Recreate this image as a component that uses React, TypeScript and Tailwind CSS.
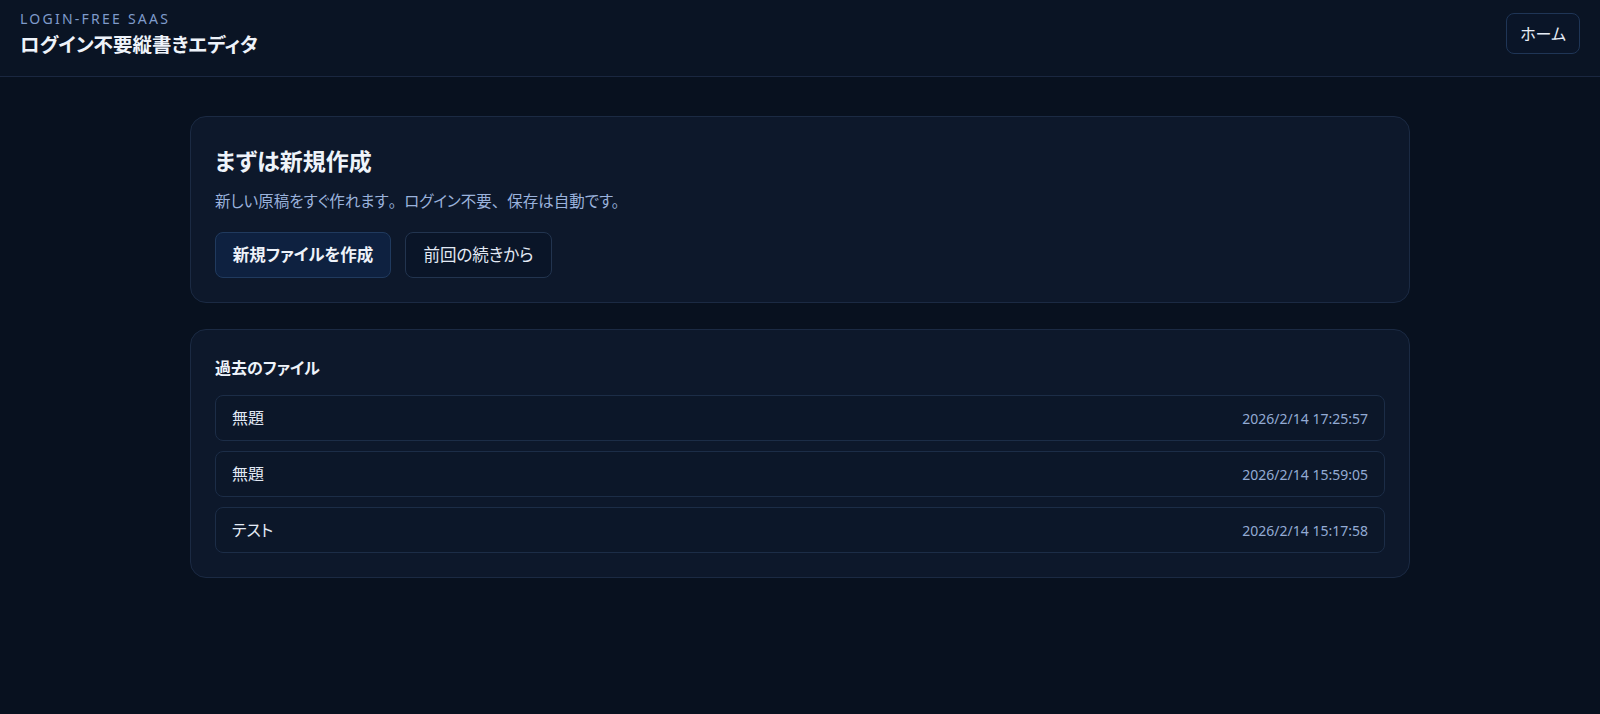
import React from "react";

const files = [
  { title: "無題", updated: "2026/2/14 17:25:57" },
  { title: "無題", updated: "2026/2/14 15:59:05" },
  { title: "テスト", updated: "2026/2/14 15:17:58" },
];

// full-width punctuation keeps its natural spacing
const Punct = ({ children }: { children: React.ReactNode }) => (
  <span className="[font-feature-settings:normal]">{children}</span>
);

export default function App() {
  return (
    <div className="min-h-screen bg-[#08111f] text-[#e3eaf5] font-['Noto_Sans','Noto_Sans_CJK_JP',sans-serif] [font-feature-settings:'palt']">
      <header className="flex items-start justify-between h-[77px] px-5 pt-[10px] bg-[#0a1424] border-b border-[#1a2740]">
        <div>
          <div className="text-[14px] leading-[18px] tracking-[0.16em] text-[#7f9bcb]">LOGIN-FREE SAAS</div>
          <h1 className="mt-[3px] text-[19.5px] leading-[28px] font-bold text-[#eef3fa]">ログイン不要縦書きエディタ</h1>
        </div>
        <button className="mt-[3px] h-[41px] px-[13px] rounded-lg border border-[#1f3556] bg-[#0a1528] text-[16px] text-[#e6ecf6]">
          ホーム
        </button>
      </header>

      <main className="max-w-[1220px] mx-auto pt-[39px] flex flex-col gap-[26px]">
        <section className="rounded-2xl border border-[#1b2a43] bg-[#0d182b] px-6 pt-7 pb-6">
          <h2 className="text-[23px] leading-[33px] font-bold text-[#eef3fa]">まずは新規作成</h2>
          <p className="mt-[11px] text-[15.5px] leading-[24px] text-[#9ab2dc]">
            新しい原稿をすぐ作れます<Punct>。</Punct>ログイン不要<Punct>、</Punct>保存は自動です。
          </p>
          <div className="mt-[19px] flex gap-[14px]">
            <button className="h-[46px] w-[176px] rounded-lg border border-[#203a5e] bg-[#0e2140] text-[16.5px] font-bold text-[#eef3fa]">
              新規ファイルを作成
            </button>
            <button className="h-[46px] w-[147px] rounded-lg border border-[#22344f] bg-[#0a1528] text-[16.5px] text-[#e3eaf5]">
              前回の続きから
            </button>
          </div>
        </section>

        <section className="rounded-2xl border border-[#1b2a43] bg-[#0d182b] px-6 pt-[26px] pb-6">
          <h3 className="text-[16px] leading-[24px] font-bold text-[#eef3fa]">過去のファイル</h3>
          <ul className="mt-[15px] flex flex-col gap-[10px]">
            {files.map((f, i) => (
              <li
                key={i}
                className="h-[46px] flex items-center justify-between px-4 rounded-lg border border-[#1c2d47] bg-[#0c1729]"
              >
                <span className="text-[16px] text-[#e3eaf5]">{f.title}</span>
                <span className="text-[14px] text-[#93abd4]">{f.updated}</span>
              </li>
            ))}
          </ul>
        </section>
      </main>
    </div>
  );
}
